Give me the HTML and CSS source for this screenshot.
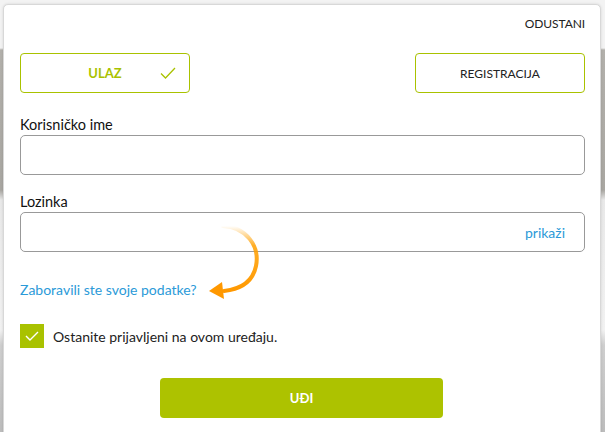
FILE: index.html
```html
<!DOCTYPE html>
<html lang="hr">
<head>
<meta charset="utf-8">
<title>Prijava</title>
<link rel="stylesheet" href="styles.css">
</head>
<body>
<div class="backdrop">
  <div class="modal">
    <div class="top-row">
      <a class="cancel" href="#">ODUSTANI</a>
    </div>
    <div class="tabs">
      <button class="tab tab-active">ULAZ
        <svg class="tab-check" width="16" height="12" viewBox="0 0 16 12"><path d="M1 6.5 L5.5 11 L15 1" fill="none" stroke="#a9c200" stroke-width="1.3"/></svg>
      </button>
      <button class="tab">REGISTRACIJA</button>
    </div>
    <label class="field-label">Korisničko ime</label>
    <div class="input"></div>
    <label class="field-label label-pass">Lozinka</label>
    <div class="input input-pass"><span class="show">prikaži</span></div>
    <div class="forgot-row">
      <a class="forgot" href="#">Zaboravili ste svoje podatke?</a>
      <svg class="arrow" width="64" height="82" viewBox="0 0 64 82">
        <defs>
          <linearGradient id="ag" x1="0" y1="0" x2="0" y2="1">
            <stop offset="0" stop-color="#ffa000" stop-opacity="0"/>
            <stop offset="0.3" stop-color="#ffa000" stop-opacity="0.85"/>
            <stop offset="1" stop-color="#ff9800"/>
          </linearGradient>
        </defs>
        <path d="M23 4 C46 5 60 24 56 44 C53 59 42 67 24 69" fill="none" stroke="url(#ag)" stroke-width="4" stroke-linecap="round"/>
        <path d="M22 60 L9 69 L24 77 Z" fill="#ff9800"/>
      </svg>
    </div>
    <div class="remember">
      <span class="checkbox"><svg width="14" height="10" viewBox="0 0 14 10"><path d="M1 5 L5 9 L13 1" fill="none" stroke="#fff" stroke-width="1.4"/></svg></span>
      <span class="remember-text">Ostanite prijavljeni na ovom uređaju.</span>
    </div>
    <div class="submit-row">
      <button class="submit">UĐI</button>
    </div>
  </div>
</div>
</body>
</html>
```
FILE: styles.css
```css
* { box-sizing: border-box; }
html, body { margin: 0; height: 100%; overflow: hidden; }
body {
  font-family: Lato, "Noto Sans", sans-serif;
  color: #222;
  background: linear-gradient(to bottom, #f3f3f3 0, #f3f3f3 48px, #b3b1ac 50px, #a9a7a2 190px, #e9e9e9 200px, #f2f2f2 330px, #cfcfcf 345px, #bdbdbd 432px);
}
.backdrop {
  padding: 4px 4px 0 3px;
  height: 100%;
}
.modal {
  background: #fff;
  border: 1px solid #d8d8d8;
  border-radius: 5px;
  box-shadow: 0 0 3px rgba(0,0,0,0.12);
  height: 440px;
  padding: 0 15px 0 16px;
}
.top-row {
  display: flex;
  justify-content: flex-end;
  height: 48px;
  padding-top: 11px;
}
.cancel {
  font-size: 12px;
  color: #222;
  text-decoration: none;
  letter-spacing: -0.1px;
}
.tabs {
  display: flex;
  justify-content: space-between;
}
.tab {
  position: relative;
  width: 170px;
  height: 40px;
  border: 1px solid #a9c200;
  border-radius: 4px;
  background: #fff;
  font-family: inherit;
  font-size: 12px;
  color: #222;
  padding: 0;
}
.tab-active {
  color: #a9c200;
  font-weight: 700;
  font-size: 13px;
}
.tab-check {
  position: absolute;
  right: 13px;
  top: 13px;
}
.field-label {
  display: block;
  font-size: 14.5px;
  font-weight: 400;
  color: #111;
  margin-top: 21px;
  height: 21px;
  line-height: 21px;
}
.label-pass { margin-top: 16px; }
.input {
  height: 40px;
  border: 1px solid #999;
  border-radius: 5px;
  display: flex;
  align-items: center;
  justify-content: flex-end;
  padding-right: 19px;
}
.show {
  color: #2b9ad8;
  font-size: 14px;
}
.forgot-row {
  position: relative;
  height: 56px;
  display: flex;
  align-items: flex-end;
}
.forgot {
  color: #2b9ad8;
  font-size: 14px;
  text-decoration: none;
  line-height: 18px;
  margin-bottom: 9px;
}
.arrow {
  position: absolute;
  left: 180px;
  top: -30px;
}
.remember {
  display: flex;
  align-items: center;
  margin-top: 16px;
  gap: 9px;
}
.checkbox {
  width: 24px;
  height: 24px;
  background: #a9c200;
  display: flex;
  align-items: center;
  justify-content: center;
}
.remember-text { font-size: 14px; }
.submit-row {
  display: flex;
  justify-content: center;
  margin-top: 30px;
  padding-right: 2px;
}
.submit {
  width: 283px;
  height: 40px;
  border: none;
  border-radius: 4px;
  background: #adc200;
  color: #fff;
  font-family: inherit;
  font-weight: 700;
  font-size: 13px;
}
```
